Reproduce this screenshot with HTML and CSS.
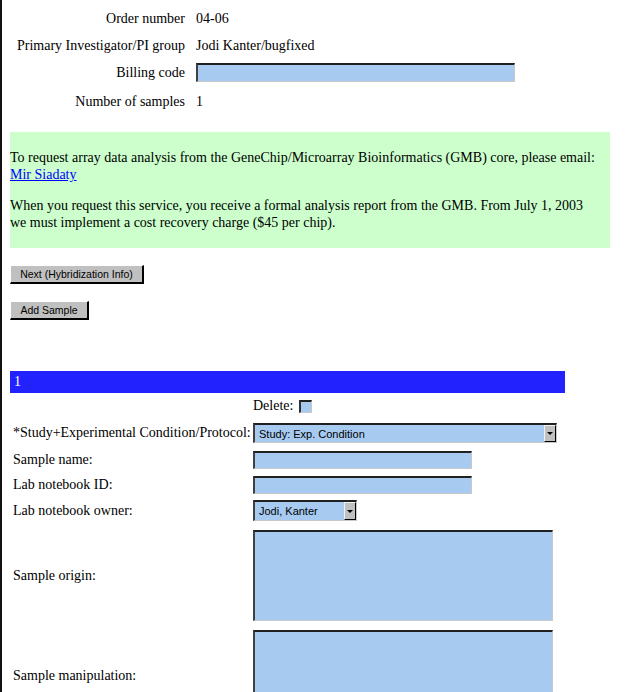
FILE: index.html
```html
<!DOCTYPE html>
<html>
<head>
<meta charset="utf-8">
<link rel="stylesheet" href="styles.css">
</head>
<body>
<div class="info">
  <div class="lbl">Order number</div><div class="val">04-06</div>
  <div class="lbl">Primary Investigator/PI group</div><div class="val">Jodi Kanter/bugfixed</div>
  <div class="lbl">Billing code</div><div class="val"><input type="text" class="field billing"></div>
  <div class="lbl">Number of samples</div><div class="val">1</div>
</div>

<div class="notice">
  <p>To request array data analysis from the GeneChip/Microarray Bioinformatics (GMB) core, please email:<br><a href="#">Mir Siadaty</a></p>
  <p>When you request this service, you receive a formal analysis report from the GMB. From July 1, 2003<br>we must implement a cost recovery charge ($45 per chip).</p>
</div>

<div class="buttons">
  <button class="btn btn-next">Next (Hybridization Info)</button>
  <button class="btn btn-add">Add Sample</button>
</div>

<div class="sample-bar">1</div>

<div class="sample">
  <div class="slbl"></div>
  <div class="sval delete">Delete:<span class="check"></span></div>

  <div class="slbl">*Study+Experimental Condition/Protocol:</div>
  <div class="sval"><div class="select select-study"><span class="sel-text">Study: Exp. Condition</span><span class="sel-arrow"><span class="tri"></span></span></div></div>

  <div class="slbl">Sample name:</div>
  <div class="sval"><input type="text" class="field short"></div>

  <div class="slbl">Lab notebook ID:</div>
  <div class="sval"><input type="text" class="field short"></div>

  <div class="slbl">Lab notebook owner:</div>
  <div class="sval"><div class="select select-owner"><span class="sel-text">Jodi, Kanter</span><span class="sel-arrow"><span class="tri"></span></span></div></div>

  <div class="slbl">Sample origin:</div>
  <div class="sval"><textarea class="area"></textarea></div>

  <div class="slbl">Sample manipulation:</div>
  <div class="sval"><textarea class="area"></textarea></div>
</div>
</body>
</html>
```
FILE: styles.css
```css
html, body {
  margin: 0;
  padding: 0;
}
body {
  box-sizing: border-box;
  min-height: 100vh;
  border-left: 2px solid #111;
  padding-left: 8px;
  font-family: "Liberation Serif", "Times New Roman", serif;
  font-size: 14px;
  color: #000;
  background: #fff;
  overflow: hidden;
}

.info {
  display: grid;
  grid-template-columns: 175px auto;
  grid-template-rows: 27px 27px 27px 31px;
  column-gap: 11px;
  align-items: center;
  padding-top: 5px;
}
.lbl {
  text-align: right;
  white-space: nowrap;
}
.val {
  display: flex;
  align-items: center;
}

.field {
  box-sizing: border-box;
  margin: 0;
  padding: 0 3px;
  background: #a6caf0;
  border-style: solid;
  border-width: 2px 1px 1px 2px;
  border-color: #202020 #c8c8c8 #c8c8c8 #404040;
  font-family: "Liberation Sans", Arial, sans-serif;
  font-size: 11px;
  outline: none;
}
.billing {
  width: 319px;
  height: 19px;
}
.short {
  width: 219px;
  height: 18px;
}

.notice {
  margin-top: 15px;
  width: 600px;
  box-sizing: border-box;
  background: #ccffcc;
  padding: 17px 0 17px 0;
  line-height: 17px;
}
.notice p {
  margin: 0;
  white-space: nowrap;
}
.notice p + p {
  margin-top: 14px;
}
.notice a {
  color: #0000ff;
  text-decoration: underline;
}

.buttons {
  display: flex;
  flex-direction: column;
  align-items: flex-start;
  gap: 17px;
  margin-top: 17px;
}
.btn {
  box-sizing: border-box;
  height: 19px;
  margin: 0;
  padding: 0;
  background: #c0c0c0;
  border-style: solid;
  border-width: 1px 2px 2px 1px;
  border-color: #ffffff #000000 #000000 #ffffff;
  font-family: "Liberation Sans", Arial, sans-serif;
  font-size: 10.5px;
  color: #000;
  text-align: center;
}
.btn-next {
  width: 134px;
}
.btn-add {
  width: 79px;
}

.sample-bar {
  margin-top: 51px;
  width: 555px;
  height: 22px;
  box-sizing: border-box;
  background: #2222ff;
  color: #fff;
  padding-left: 4px;
  line-height: 22px;
}

.sample {
  display: grid;
  grid-template-columns: 243px auto;
  grid-template-rows: 26px 28px 26px 24px 27px 103px 97px;
  align-items: center;
}
.slbl {
  padding-left: 3px;
  white-space: nowrap;
}
.sval {
  display: flex;
  align-items: center;
}
.delete {
  gap: 6px;
}
.check {
  display: inline-block;
  box-sizing: border-box;
  width: 13px;
  height: 13px;
  background: #a6caf0;
  border-style: solid;
  border-width: 2px 1px 1px 2px;
  border-color: #202020 #c8c8c8 #c8c8c8 #303030;
}

.select {
  box-sizing: border-box;
  display: flex;
  align-items: center;
  background: #a6caf0;
  border-style: solid;
  border-width: 2px 1px 1px 2px;
  border-color: #202020 #c8c8c8 #c8c8c8 #404040;
  font-family: "Liberation Sans", Arial, sans-serif;
  font-size: 11px;
}
.select-study {
  width: 304px;
  height: 20px;
}
.select-owner {
  width: 104px;
  height: 21px;
}
.sel-text {
  flex: 1;
  padding-left: 4px;
  white-space: nowrap;
}
.sel-arrow {
  box-sizing: border-box;
  width: 12px;
  height: 100%;
  display: flex;
  align-items: center;
  justify-content: center;
  background: #c0c0c0;
  border-style: solid;
  border-width: 1px 1px 1px 1px;
  border-color: #f0f0f0 #000 #000 #f0f0f0;
}
.tri {
  width: 0;
  height: 0;
  border-left: 3px solid transparent;
  border-right: 3px solid transparent;
  border-top: 3px solid #000;
}

.area {
  box-sizing: border-box;
  display: block;
  margin: 0;
  width: 300px;
  height: 91px;
  background: #a6caf0;
  border-style: solid;
  border-width: 2px 1px 1px 2px;
  border-color: #202020 #c8c8c8 #c8c8c8 #404040;
  resize: none;
  overflow: hidden;
  outline: none;
}
```
